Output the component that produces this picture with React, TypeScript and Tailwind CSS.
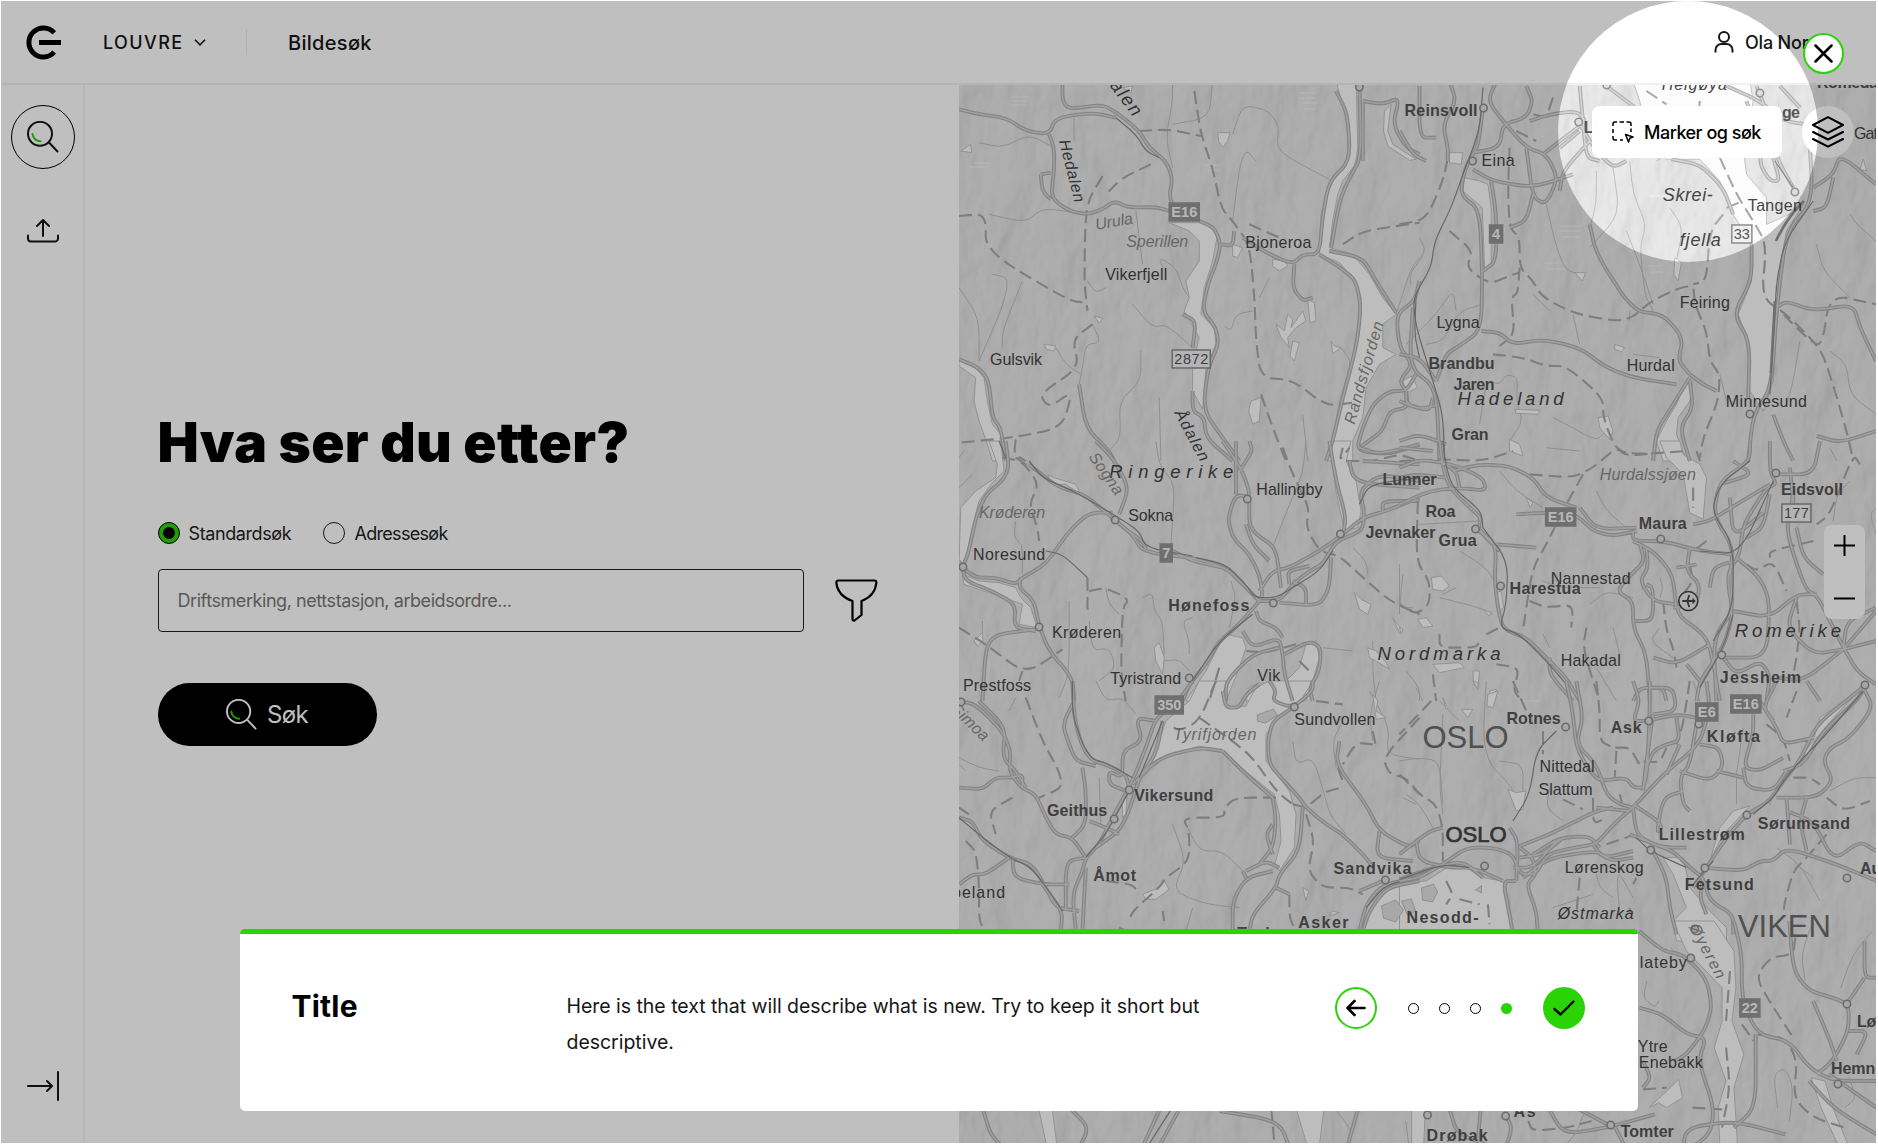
import React from "react";

type Layer = { x: number; y: number; sx?: number; water: string[]; roads: string[]; rails?: string[]; borders: string[]; streams: string[] };

// Each sheet is drawn in thirds of a pixel from its own origin.
const sheets: Layer[] = [
  {
    x: 960, y: 80,
    water: [
      "M1130,0L1190,0L1195,200Q1190,250 1180,260L1150,300L1135,340L1120,420L1110,500L1180,520L1230,580L1270,650L1310,700L1270,730L1270,800L1310,820L1260,850L1220,920L1210,1010L1180,1080L1180,1140L1105,1140L1120,1080L1140,960L1170,860L1200,760L1205,650L1190,600L1140,545L1080,520L1085,400L1110,310L1165,240L1165,130Z",
      "M630,425L740,425L775,460L760,540L735,620L725,700L765,740L770,790L740,860L735,930L730,985L700,930L700,850L720,770L675,690L690,650L680,600L720,540L720,480L690,450Z",
      "M0,840L40,850L75,890L85,960L100,1030L125,1060L130,1140L100,1140L85,1090L60,1020L45,960L50,890L0,855Z",
      "M775,155L812,155L805,180L790,200L778,180Z", "M940,535L975,540L985,555L960,570L940,555Z",
      "M950,730L975,750L985,700L1000,715L995,740L1030,690L1040,720L1010,740L985,770L990,800L965,770Z", "M1045,655L1065,665L1070,720L1052,725Z",
      "M1000,780L1020,785L1005,840L992,825Z", "M1115,780L1125,795L1145,800L1120,818Z", "M875,960L905,950L900,1020L880,1030L868,990Z",
      "M255,790L290,795L285,810L262,805Z", "M405,705L432,712L420,725Z", "M5,210L35,190L38,215Z", "M820,490L850,500L835,530L820,525Z",
      "M1275,90L1295,70L1285,150L1300,190L1370,235L1350,238L1285,195L1272,150Z", "M490,20L520,15L515,35Z",
    ],
    roads: [
      "M310,0L310,60L330,85L430,70L480,100L540,150L570,200L620,240L640,290L630,350L650,390",
      "M0,85L60,100L140,110L200,150L270,160L290,110L400,95L470,110",
      "M270,160L285,200L285,270L275,350L330,390L385,400L430,385L465,360L510,380L590,378L630,390",
      "M245,280L250,330L275,355M245,280L275,275", "M720,420L765,440L785,490L770,550L745,610L730,690L770,740L778,790L750,850L735,940L740,1000L790,1070L840,1140",
      "M700,800L710,720L670,700M700,930L700,990L735,1010L740,1070L820,1140", "M1200,0L1205,230L1170,290L1140,360L1115,500",
      "M1130,30L1165,100L1172,240L1110,300L1090,400L1080,520L1030,520L1000,550L920,515L850,470",
      "M1080,520L1150,565L1190,600L1205,680L1190,800L1150,950L1120,1080L1100,1140", "M1110,510L1210,530L1250,600L1310,695",
      "M785,490L820,495L825,450M1005,550L1000,620L1030,660L1060,650", "M1380,600L1365,660L1310,700L1320,800L1360,850L1320,900L1340,930",
      "M0,835L60,860L90,900L100,1010L125,1040L140,1140", "M1370,880L1340,930L1290,930L1240,970L1210,1040L1190,1110L1290,1120L1380,1090",
      "M1340,930L1345,980L1290,990L1270,1050L1200,1100", "M1210,60L1270,70L1320,50L1300,130L1340,200L1380,220M1210,60L1210,240", "M360,910L380,1040L450,1110L465,1140",
    ],
    rails: ["M470,110L530,160L560,210L600,230", "M1370,640L1365,760L1380,830"],
    borders: [
      "M705,30L725,160L760,260L785,380L820,420L870,490L885,640L890,780L905,890L1000,897L1100,975L1180,965", "M540,150L630,145L725,165",
      "M575,250L490,290L440,340M430,285L380,370L375,600L385,690", "M0,405L80,398L80,510L330,660L385,665", "M905,940L940,1040L980,1140",
      "M400,730L340,775L360,860L240,940L270,980L340,930L310,1040L160,1070L0,1085", "M1150,490L1210,450L1380,425M870,430L960,470", "M170,1075L165,1120L200,1140",
    ],
    streams: [
      "M380,400L250,380L200,425L90,400M285,200L210,160L130,200L60,185", "M820,420L840,260L860,205L890,240M760,0L750,110L640,130",
      "M640,260L620,170L640,60L640,0M820,160L850,70L930,90L960,140L950,210L1110,295", "M530,390L550,550M610,560L600,530L650,560L670,620L690,650",
      "M100,580L150,590L130,680L60,840M190,600L130,750L130,800M0,620L60,710L60,840", "M520,670L580,740L620,730L700,800M400,730L425,785L380,790L370,860L360,910",
      "M545,810L545,900L480,960L485,1070L450,1110M290,800L320,850L365,880", "M1380,530L1355,560L1310,700M880,690L830,700L815,750L795,735M1145,800L1175,840L1160,900",
      "M600,950L605,1140M1030,1000L1045,1140M345,110L345,180M385,600L410,635L440,620M900,650L930,590",
    ],
  },
  {
    x: 1400, y: 80,
    water: [
      "M700,0L1050,0L1060,60L1030,200L1040,280L1100,350L1100,430L1190,390L1210,370L1160,450L1140,560L1130,680L1120,900L1090,990L1050,930L1045,780L1015,700L1055,600L1055,490L1000,400L960,300L900,235L800,235L750,180L720,60Z",
      "M195,290L240,300L265,310L275,380L275,545L255,565L248,380L190,330Z",
      "M860,900L880,900L870,960L835,1010L830,1060L860,1140L790,1140L770,1080L800,1020L830,970Z",
      "M150,215L190,215L185,250L150,245Z", "M825,530L845,545L835,600L822,580Z", "M525,575L558,575L548,600Z", "M645,790L675,800L665,812L645,805Z",
      "M345,985L420,988L415,1000L350,997Z", "M595,1010L625,1005L640,1050L630,1075L600,1040Z", "M330,1075L360,1090L370,1125L330,1110Z", "M10,900L35,885L55,920L20,935Z",
      "M1390,235L1400,270L1380,265Z",
    ],
    roads: [
      "M250,80L235,200L200,250L180,340L240,385L248,570L245,750L170,800L140,820L110,900",
      "M150,0L170,60L130,130L145,200L145,240M60,15L60,170L110,170", "M290,0L265,60L310,120L380,200L440,220L475,290L440,370L400,350L380,200",
      "M380,15L400,60L380,110L310,130L300,200L220,215", "M220,265L280,300L400,320L520,280M275,300L290,400L290,540L250,570", "M400,340L380,420L330,440",
      "M430,220L520,150L560,120L530,90L450,100L390,120M540,130L590,210L640,260L680,240", "M540,15L550,120L560,230L600,240M620,15L680,60L720,90",
      "M480,200L540,150M480,330L490,270L570,180", "M245,750L300,755L340,790L430,775L540,800L620,860L700,890L830,910M570,430L590,520L700,690L790,700L850,770L835,840L870,880",
      "M870,880L910,910L950,930M870,890L820,970L770,1050L760,1140M870,900L880,980L840,1040L870,1140",
      "M815,235L900,250L970,320L1000,400M1070,15L1100,90L1130,230L1180,320M980,15L1080,60L1150,120L1220,130M1140,15L1200,80M1040,60L1060,120",
      "M1120,230L1140,300L1110,300L1080,250L1085,200", "M1055,490L1055,600L1000,700L1050,780L1045,950",
      "M1225,130L1240,360L1160,450L1130,680L1115,920L1060,1000L1045,1140", "M1130,680L1160,660L1240,690L1360,670L1380,740L1428,840", "M1240,320L1300,280L1320,220L1428,310M1300,290L1280,380L1240,390",
      "M1120,1000L1150,1080L1180,1140M1428,1050L1320,1085L1250,1065M0,150L40,220L80,240", "M40,680L30,860L110,920L120,1140M0,820L60,830L110,900M0,960L60,985L120,970", "M0,1080L60,1060L140,1090",
      "M20,930L20,970L90,990L100,950",
    ],
    rails: ["M250,20L240,150L190,280L155,380L105,480L95,560L40,650L50,740L100,900L130,1000L135,1140", "M1125,240L1180,320", "M1240,360L1155,480L1130,600L1125,700L1110,940"],
    borders: [
      "M330,200L325,330L330,440L360,470L360,560L400,600L430,650L530,700L680,725L760,655L880,605L885,670L920,750L930,840L960,880L955,960L910,1070L900,1130",
      "M0,430L80,415L130,300L145,230M360,560L355,635L335,650L345,760L300,795", "M280,820L370,830L440,855L500,855L610,950L610,1010L650,1110L720,1120L860,1110",
      "M970,400L930,450L920,600L880,610M740,30L800,70", "M900,60L895,110M960,230L1010,340L1060,420L1100,490L1085,650L1160,700L1260,800L1290,880L1340,1050L1360,1140",
      "M980,380L1030,360M1150,700L1220,770L1265,800L1290,640L1428,670", "M150,450L220,510L200,560L270,610L340,580L360,575", "M350,150L410,180M460,50L440,110L400,100",
    ],
    streams: [
      "M60,470L80,510L30,580L35,610M20,790L110,700L160,625L170,690M250,670L180,690L130,780L80,790", "M440,370L470,500L500,570L550,580M400,640L450,690",
      "M590,270L590,370L570,440M640,260L660,400L570,500M690,240L700,340L740,430L720,500L735,640L760,690", "M810,380L850,440L830,540M680,450L720,550L760,670M690,690L690,720",
      "M1350,400L1370,430L1428,480M1250,490L1270,570L1350,650M1200,780L1180,900L1160,970M1290,810L1340,850L1350,940L1428,1000", "M240,1030L260,900L300,910L320,880L355,890L350,960L370,1020L330,1080",
      "M520,700L540,790M460,1010L500,1030L590,1080L620,1050M780,830L700,820M440,1100L540,1110", "M960,880L980,960M1290,1100L1310,1140M770,240L900,160",
    ],
  },
  {
    x: 960, y: 440,
    water: [
      "M1110,0L1175,0L1160,60L1190,120L1205,210L1195,260L1155,270L1130,150Z", "M90,0L125,0L135,90L100,125L60,180L40,260L25,330L15,370L0,370L5,200L50,150L110,110L115,70Z",
      "M10,400L60,420L120,425L170,440L185,470L215,500L235,560L180,550L190,490L150,475L90,455L15,430Z",
      "M800,580L850,590L860,620L840,680L800,780L680,780L740,690L780,610Z", "M1040,610L1070,600L1080,650L1060,720L1040,780L980,780L980,720L1020,680Z",
      "M585,620L600,605L615,650L610,700L590,660Z", "M1185,455L1205,475L1235,490L1225,520L1200,505Z", "M1225,620L1250,630L1280,665L1290,685L1250,660L1230,650Z",
      "M45,600L70,575L72,600L55,615Z", "M265,100L285,110L350,130L365,160L320,130L280,130Z", "M870,740L900,725L940,750L910,780L860,780Z", "M1300,530L1330,570L1320,575Z",
    ],
    roads: [
      "M140,0L150,80L130,120L80,160L50,230L30,330L10,380L50,410L110,410L170,430L190,410L260,370L330,270L390,215L460,215",
      "M210,70L290,135L370,160L400,180L470,240L520,280L545,325L600,340L700,350L800,380L850,430L900,480",
      "M470,240L500,265L550,300L560,325", "M790,0L850,90L875,170L830,160L805,230L820,290L870,340L900,400L910,460L900,480", "M870,180L870,250L890,280L950,320L965,440",
      "M900,450L940,390L990,380L1080,330L1150,280L1210,230L1280,210L1380,170", "M900,480L960,480L1000,430L1050,390L1090,370L1130,300L1210,270L1215,210L1200,150L1260,100L1380,120",
      "M990,430L985,390L1050,375M960,485L1080,495L1110,440L1115,350M1000,420L1040,440L1040,490", "M900,480L830,560L780,600L740,670L690,730L670,780",
      "M850,570L880,620L960,590L970,640L975,700L1000,780M890,510L900,540L950,560L970,590", "M975,640L1050,600L1085,620L1080,690L1050,740L1060,780M800,780L800,720L880,640L960,620",
      "M10,380L20,420L100,450L170,490L165,560L230,570M10,380L0,360", "M185,410L180,440L225,480L240,555L270,630L340,710L345,780M230,565L110,580L80,620L70,780",
      "M410,0L460,50L510,140L480,220M830,160L830,0M840,90L880,30L870,0", "M1170,60L1180,110L1230,130L1380,140M1210,60L1380,70M1200,20L1260,40L1380,10", "M1150,280L1160,230L1130,120L1110,0", "M1270,210L1270,180L1380,180",
      "M860,250L880,310L930,360M640,330L700,360L790,380",
    ],
    rails: ["M120,0L140,50M210,60L250,110L340,150L370,165L470,225L540,270L560,320L700,345", "M710,350L800,370L860,430L885,470L950,470L1000,440L1080,390L1120,330", "M880,520L780,600L700,720", "M1380,110L1230,130L1200,190M260,330L310,340L385,410"],
    borders: [
      "M130,50L190,60L240,130L210,190L235,260L240,300M170,50L230,90", "M385,410L385,520M390,450L440,440L510,475L490,500L485,700L500,780", "M970,20L1000,100L1050,200L1040,260L1080,330L1140,345L1200,400L1290,480L1380,520",
      "M0,560L80,610L200,700L310,625M190,690L180,720", "M1160,60L1210,60L1240,60L1320,40L1380,60M1150,20L1140,60L1170,20", "M860,630L920,635L1010,610M780,680L750,780M1020,660L1060,700",
    ],
    streams: [
      "M590,0L600,70L640,120L645,170L635,310M1040,0L1030,100L990,190L940,320M170,240L165,290L190,310L190,400", "M440,440L450,490L480,520M550,470L580,455L585,510L610,540L615,640",
      "M330,480L330,700L300,770M390,540L400,630L450,620L470,680L420,720M610,660L660,655L690,690", "M1090,620L1180,630M700,530L670,540L690,600L690,640M815,420L830,470L810,560", "M1180,320L1220,360L1225,400M1330,400L1320,500L1360,500M1240,600L1240,700L1250,780",
      "M0,140L40,100M15,30L0,50M70,540L70,600",
    ],
  },
  {
    x: 1400, y: 440,
    water: ["M780,0L840,0L850,40L900,70L920,110L910,235L870,215L850,100L800,50Z", "M95,410L125,405L150,435L130,450L100,445Z", "M55,535L80,530L100,555L70,560Z", "M100,670L180,665L195,680L120,695Z", "M220,690L240,690L235,740L222,730Z", "M250,505L275,515L270,525Z", "M290,455L305,450L312,500L300,510Z", "M270,750L290,745L285,780L270,780Z", "M380,170L400,185L392,200Z", "M0,560L10,565L5,580Z"],
    roads: [
      "M120,0L130,80L150,140L210,200L245,230L235,265L290,310L285,420L295,500L310,565L380,590L430,640L500,710L540,780", "M235,265L300,330M290,310L410,320",
      "M350,220L430,215L530,220L580,270L640,285L710,270M540,200L590,265L710,260", "M0,80L60,55L160,70L250,110L260,150L180,140L90,150L0,190", "M160,90L240,70L330,75L400,110L440,170L530,200",
      "M700,270L700,300L790,300L900,330L1000,340M700,300L760,330L820,400L830,520L900,570L930,610L960,780", "M720,310L735,360L695,400L650,450L700,480L700,560L740,640L750,780M740,320L745,380L720,420L760,480L830,490",
      "M870,320L860,390L900,430L890,490L820,500M890,370L830,380M700,540L760,540L760,440L740,430", "M1050,0L1050,60L960,120L940,220L1000,320L990,400L1000,510L940,590L950,780",
      "M1110,0L1110,90L1130,130L1100,140L1030,250L1020,340L980,400L1000,520L970,620L900,720L890,780", "M1110,130L1010,190L930,240L880,250M1110,160L1090,260L1040,290M990,170L1000,290L1090,215M960,130L1060,100L1000,60",
      "M1170,80L1180,180L1160,260L1180,340L1220,450L1250,460L1320,600L1370,690L1428,730", "M1190,260L1210,350L1270,400M1130,100L1240,100L1260,0M1180,200L1180,150",
      "M1000,510L1110,530L1190,460L1250,460M1010,350L1080,410L1110,480L1100,650L970,650", "M1330,625L1428,600M1330,625L1428,510M1330,625L1210,720L1130,710M1330,625L1340,540L1428,500M1220,720L1260,780",
      "M930,610L830,670L760,650M900,720L860,670M970,650L1010,700L1080,660L1110,700L1100,780", "M930,440L940,380L1000,360M1190,470L1160,560L1240,640L1330,625", "M0,20L100,30M700,780L720,740L790,740L800,780M0,110L50,100L140,110",
      "M450,650L450,700L520,780M120,60L170,90L180,140",
    ],
    rails: ["M130,0L140,80L160,140L245,210L250,260", "M250,260L325,360L320,490L300,560L360,580L440,660L500,730", "M1050,60L960,130L935,210L1000,310L1000,500L940,600", "M900,330L1020,340L1120,120M1000,520L970,620L900,740"],
    borders: [
      "M0,60L130,55L250,60L340,30M390,100L520,110L580,80L650,20L680,45L780,35", "M550,100L500,190L440,310L400,380L380,500L370,570", "M55,180L50,360L90,420L90,490L50,520L0,490", "M390,480L440,500L520,490L515,560",
      "M120,580L120,620L230,620L240,600M260,580L300,560M100,700L110,780", "M880,140L880,200M890,30L900,60", "M1380,70L1360,40L1290,220L1250,250M1240,300L1110,330L1110,350M1040,370L1070,390L1120,360L1160,450", "M870,370L880,420L850,460M790,480L800,570L820,620L830,680", "M290,670L360,680L340,750L370,780M560,560L550,620L580,720L600,780", "M1190,480L1200,560L1190,650L1180,700M920,300L880,330",
    ],
    streams: [
      "M590,150L620,210L680,260M300,90L350,150L430,200M60,250L240,240M180,330L260,380L290,430", "M570,490L620,450L700,470M640,560L660,640M120,470L240,500L280,520M590,680L650,780M0,370L0,520",
      "M780,410L790,440L780,470M430,420L480,440L600,440M450,620L430,580M170,440L130,460", "M1428,280L1410,220L1428,200M1300,240L1310,160L1350,120M20,690L60,740L60,780M780,560L750,600L820,650",
    ],
  },
  {
    x: 960, y: 680,
    water: [
      "M690,60L720,0L800,0L790,50L810,80L860,75L890,20L930,0L1060,0L1030,50L1000,80L950,120L920,160L920,240L960,290L990,330L1010,400L1005,500L960,570L945,555L965,480L960,400L945,340L870,280L790,210L720,195L620,225L560,280L530,310L580,240L620,120Z",
      "M1280,620L1380,600L1380,760L1190,760L1215,720Z", "M490,410L500,400L505,330L490,360Z", "M550,640L600,620L612,595L630,625L590,655L560,655Z", "M1240,40L1255,60L1250,90L1280,110L1250,115Z", "M1030,620L1048,630L1040,660Z", "M1120,690L1140,695L1110,705Z",
    ],
    roads: [
      "M0,60L50,70L130,150L155,210L150,270L185,320L230,340L260,410L290,460L340,470L380,530", "M60,60L140,140L130,230L170,270L200,320M0,320L70,325L110,290L160,290L190,280L190,320", "M340,0L345,110L370,200L400,240L440,250L500,280L510,320",
      "M345,60L310,130L330,190L350,240L410,255M370,260L380,330L380,430L340,470", "M700,0L650,70L590,110L560,200L520,300L460,410L420,490L380,530L370,570L340,640L350,750", "M610,120L590,220L540,290L510,390L480,450L410,500",
      "M590,120L530,110L550,180L490,210L490,290L450,270L450,310L500,330", "M0,410L40,420L70,480L150,530L220,550L260,620L290,680L360,690M160,530L165,590L250,610L330,610M380,530L320,540L320,690",
      "M250,610L310,690L305,750M380,560L370,750M150,530L80,580L40,580L0,610", "M1000,80L940,120L925,180L930,250L965,290L1020,350L1040,380L1100,430L1150,460L1220,530L1240,560",
      "M1030,380L1020,510L960,580L950,620L880,700L870,750M940,570L860,590L820,660L820,750M860,570L920,540L960,560", "M940,430L920,460L940,520M940,350L950,420L940,500L900,550M860,590L850,570", "M790,30L800,80L840,80L860,40L900,10",
      "M930,0L950,30L940,60L1000,80L1060,30L1060,0M790,210L860,280L940,350M520,310L600,230L720,200L790,210", "M1140,180L1130,250L1220,370L1260,450L1350,500L1380,480M1260,450L1250,530L1360,540M950,620L990,640M390,420L440,440L480,460",
      "M1380,590L1270,610L1220,670L1200,750M1200,630L1270,600M1380,600L1280,620L1230,690L1210,750",
    ],
    rails: ["M340,0L340,100L370,190L400,235L440,245L520,290", "M610,120L540,290", "M510,330L440,460L380,530M0,410L60,460L150,530L220,560L310,690", "M1220,680L1280,610L1380,590"],
    borders: [
      "M200,50L250,180L300,270L310,320L240,350M160,350L90,390L110,460M0,380L30,400", "M20,480L50,510L60,600L60,720L80,750", "M770,0L720,120L660,150L630,130M720,110L820,180L880,230L950,330L1000,370M950,350L830,350L795,380L795,410L670,410L690,450L690,540L620,590L600,620L520,690L510,720",
      "M1000,370L1040,380L1100,330L1150,320M1040,400L1065,480L1045,570L1090,620L1170,620L1210,640M990,640L990,710L1010,750", "M1380,110L1270,230L1290,280L1340,290L1380,340M1240,150L1250,200", "M1240,190L1190,185L1150,250M1070,60L1150,70", "M440,600L520,610L540,640M610,690L615,720M480,740L500,750", "M1135,260L1150,300",
    ],
    streams: [
      "M0,230L60,260L120,270M640,430L680,540L640,630L740,670L840,680M680,430L720,510L790,510L850,570", "M1000,180L1010,250L1060,230L1090,320L1110,400L1160,460M1130,260L1120,180L1145,130", "M1230,30L1290,140L1280,220L1380,235M1330,350L1370,370M700,680L680,750M0,250L20,270M410,0L440,60L490,50L530,100",
      "M420,290L425,430M170,50L150,90M1260,0L1230,100L1240,180",
    ],
  },
  {
    x: 1400, y: 680,
    water: [
      "M0,605L80,600L150,555L200,560L250,590L310,600L330,660L335,760L0,760Z", "M790,530L850,530L870,620L930,690L980,740L980,780L830,780L820,720L860,680L820,580Z",
      "M325,325L350,335L378,330L370,385L350,390Z", "M265,40L295,30L280,80L262,75Z", "M185,85L220,85L205,110Z", "M130,50L145,80L140,85Z", "M220,0L235,5L235,25Z", "M1260,110L1370,35L1310,100L1250,170L1210,240L1200,230L1240,180Z", "M1000,390L1050,375L970,460L930,540L960,440Z", "M1100,355L1120,345L1110,370Z",
    ],
    roads: [
      "M0,600L60,590L130,550L200,500L280,500L340,520L360,580L410,580L440,520L520,500L590,490L640,430L700,380L790,280L900,190L930,80L920,0", "M360,495L450,460L510,430L590,390L640,380M400,520L480,470L570,465L600,500",
      "M360,530L430,520L490,470M370,590L450,530L590,510L620,530L700,510", "M330,440L355,480L350,600M340,560L400,560L470,480M360,500L400,530L410,580L380,610L410,690L415,760", "M350,600L310,600L330,700L340,760M0,520L90,450L130,440M50,480L60,540L150,560L220,560L310,600",
      "M0,595L100,560L190,540L250,590", "M500,0L520,100L530,200L570,270L600,300L680,290L700,320L740,320L750,100L750,0M530,0L550,110L530,190L590,250L620,340L660,370L700,380",
      "M700,0L720,60L700,120L740,120L830,100L890,110M760,100L740,240L730,330M750,20L820,20L830,90L760,100", "M830,110L840,180L800,190L760,210L740,260M890,130L870,250L840,290L850,370L870,390M800,280L840,190",
      "M900,190L960,200L970,260L930,300L840,270M1060,100L1060,160L1030,260L1080,270L1150,230M1080,60L1130,140L1150,190L1240,170M1130,0L1090,80L1120,120", "M1030,260L1040,320L1120,330L1160,270M950,270L1030,290",
      "M1150,270L1210,250L1270,150L1370,60L1400,10M1390,20L1420,80L1350,170L1290,200L1270,240L1300,300L1250,350L1130,350", "M1400,10L1350,50L1250,130L1200,240L1150,300L1110,360L1040,400L980,470L920,560L880,620",
      "M700,380L710,460L760,490L820,510L870,560L910,590L930,660L1000,700L1000,760M690,460L790,500L860,500M700,370L790,430L770,460L790,350L850,330", "M760,510L800,590L810,680L830,760M910,560L1030,570L1080,540L1120,540L1160,500L1310,550L1430,600",
      "M910,590L900,650L920,700M1160,350L1170,490M1160,390L1240,420L1300,540L1380,480L1428,510M1220,350L1200,420L1220,510", "M580,490L600,520L640,540L700,530M590,380L690,390",
    ],
    rails: ["M470,150L410,210L390,340L340,420", "M1390,30L1270,170L1200,240L1150,300L1120,350L1060,400M940,540L880,610", "M710,470L750,510L860,560", "M0,595L130,550L210,560"],
    borders: [
      "M340,0L380,90M95,60L0,160M0,280L60,340L110,370L130,440L130,540", "M430,150L430,220M590,0L600,90L600,180L640,200L650,200L690,200L720,250L710,240L780,245L800,200", "M490,355L550,385M580,350L580,430L620,410", "M660,340L670,380M620,490L680,470L700,460",
      "M540,590L530,700M700,610L710,590M690,700L690,680", "M1180,290L1230,290L1260,310M1280,350L1330,390L1410,360M1280,460L1220,530L1180,570L1155,660L1150,700M1100,130L1150,170L1170,240", "M870,0L850,130L830,190M1190,30L1160,110M650,210L645,290", "M140,600L160,640L140,670M180,655L240,670M265,670L270,730",
    ],
    streams: [
      "M0,240L60,230L120,240L130,370M130,100L120,320L130,400M260,0L250,170L270,250L330,310L350,350", "M120,60L180,120M450,320L440,380L490,420M1010,280L1010,370M1130,500L1200,550L1260,660M1200,560L1240,590", "M590,580L600,620L640,650M460,680L580,640M700,650L650,560L660,700M20,340L60,370L100,440M300,240L370,250L370,330", "M1290,330L1360,290L1428,290M880,0L900,60M1030,140L1010,280M50,20L70,60",
    ],
  },
  {
    x: 1260, y: 920, sx: 0.3951,
    water: [
      "M1045,0L1150,0L1200,90L1205,200L1195,300L1225,400L1200,500L1210,690L1165,690L1160,560L1180,480L1150,380L1170,300L1170,200L1080,90Z", "M1395,470L1430,480L1450,560L1495,690L1470,690L1420,560Z", "M985,560L1030,510L1060,475L1070,530L1030,560L1010,545Z", "M90,550L165,550L150,690L125,690Z", "M385,550L420,550L415,690L385,690Z", "M-560,550L-525,550L-510,690L-535,690Z",
    ],
    roads: [
      "M960,30L1020,90L1070,100L1130,170L1145,260L1125,330L1080,400L1050,420M960,260L1020,280L1080,340L1130,350L1110,420L1150,560L1140,640L1080,690", "M1200,0L1220,100L1220,240L1260,340L1340,360L1390,440L1450,480L1560,480", "M1340,0L1350,150L1390,210L1450,230L1490,250L1490,330L1450,420L1410,460",
      "M1400,240L1440,350L1460,420M1490,330L1540,330L1510,400M1530,60L1530,170L1560,170M1530,170L1490,240", "M1255,340L1255,560L1200,620M1390,480L1450,560L1560,640M1070,690L1080,620L1200,600L1330,640", "M250,560L220,690M480,560L500,640L620,690M560,560L550,690M730,560L770,640L880,620L1000,580M620,580L640,620L620,690", "M880,610L800,560M900,620L930,690M970,420L990,470L970,500M1440,460L1560,560",
      "M-700,560L-680,640L-640,690M-480,560L-430,620L-460,690M-250,560L-300,690M-200,560L-260,690M-100,570L50,600L80,690",
    ],
    rails: ["M-220,560L-290,690"],
    borders: ["M1190,150L1180,300M1220,310L1250,360M1355,50L1350,100L1290,110L1255,170L1300,260L1350,350M1260,340L1330,350L1360,420L1350,530L1400,590L1480,620", "M1180,380L1190,500L1170,620M970,505L1030,500M1095,560L1170,565M30,560L40,690M680,600L690,630L780,620L840,600"],
    streams: ["M1400,0L1370,100L1380,180M1550,30L1500,100L1470,200M1310,560L1300,460L1330,440L1350,500L1340,600M980,180L970,230L1000,260L1010,240", "M1490,470L1510,530L1480,560M1040,80L1060,110M820,580L800,640L760,690M190,560L240,640L210,690M380,690L370,600"],
  },
];

// Rounds the corners of a polyline while keeping its end points.
const smooth = (d: string) =>
  d.split("M").filter(Boolean).map((part) => {
    const p = part.split("L").map((s) => s.split(",").map(Number));
    if (p.length < 3) return "M" + part;
    const at = (a: number[], b: number[], t: number) => `${a[0] + (b[0] - a[0]) * t},${a[1] + (b[1] - a[1]) * t}`;
    let out = `M${p[0]}`;
    for (let i = 1; i < p.length - 1; i++) out += `L${at(p[i], p[i - 1], 0.4)}Q${p[i]} ${at(p[i], p[i + 1], 0.4)}`;
    return out + `L${p[p.length - 1]}`;
  }).join("");

const relief =
  "M1012,96h18M1010,100h20M1012,104h16M974,162h18M970,166h20M1300,92h16M1298,97h18M1302,102h16M1304,108h12M1560,225h22M1558,230h24M1562,236h18M1545,262h22M1547,268h20M1650,195h20M1648,265h14M1650,271h14M1470,205h16M1472,211h14M1205,164h14M1207,169h12M1525,700h14M1600,670h12";

const nodes: [number, number][] = [
  [1484, 107], [1473, 160], [1579, 121], [1760, 92], [1795, 191], [1750, 413], [1776, 472], [1661, 538], [1476, 528], [1501, 585], [1722, 654], [1865, 684], [1248, 498], [1341, 533], [1274, 602], [1116, 519], [964, 566], [1040, 626], [1190, 677],
  [1295, 706], [1130, 789], [1115, 818], [1386, 879], [1485, 865], [1566, 726], [1649, 720], [1699, 723], [1747, 814], [1651, 849], [1705, 867], [1847, 877], [1695, 928], [1691, 957], [1847, 1003], [1838, 1083], [1506, 1115], [1611, 1124], [1428, 1114], [962, 701], [1607, 84], [1360, 86],
];

type Label = [text: string, x: number, y: number, w: number, kind?: string, rotate?: number];
const labels: Label[] = [
  ["dalen", 1103, 75, 52, "I", 53], ["Hedalen", 1060, 140, 64, "i", 76], ["Urula", 1097, 229, 38, "w", -10], ["Sperillen", 1127, 246, 62, "w"], ["Vikerfjell", 1106, 279, 62], ["Bjoneroa", 1246, 247, 66], ["Gulsvik", 991, 364, 52],
  ["Ådalen", 1175, 412, 56, "i", 62], ["Randsfjorden", 1355, 424, 106, "w", -74], ["Ringerike", 1110, 477, 124, "I"], ["Sogna", 1089, 456, 48, "w", 55], ["Hallingby", 1257, 494, 66], ["Sokna", 1129, 520, 45], ["Krøderen", 980, 517, 66, "w"],
  ["Noresund", 974, 559, 72], ["Hønefoss", 1169, 610, 81, "b"], ["Krøderen", 1053, 637, 69], ["Tyristrand", 1111, 683, 71], ["Vik", 1258, 680, 23], ["Prestfoss", 964, 690, 68], ["Simoa", 951, 709, 46, "w", 44],
  ["Reinsvoll", 1405, 115, 73, "b"], ["Eina", 1482, 165, 33], ["L", 1584, 132, 8, "b"], ["Helgøya", 1662, 89, 65, "i"], ["Romedal", 1817, 87, 65, "b"], ["Stange", 1750, 117, 50, "b"], ["Gata", 1854, 138, 32],
  ["Skrei-", 1663, 200, 50, "i2"], ["Tangen", 1748, 210, 54], ["fjella", 1680, 245, 41, "i2"], ["Feiring", 1680, 307, 50], ["Lygna", 1437, 327, 43], ["Brandbu", 1429, 368, 66, "b"], ["Jaren", 1454, 389, 41, "b"], ["Hadeland", 1458, 404, 106, "I"], ["Gran", 1452, 439, 37, "b"],
  ["Hurdal", 1627, 370, 48], ["Minnesund", 1726, 406, 81], ["Lunner", 1383, 484, 54, "b"], ["Roa", 1426, 516, 30, "b"], ["Jevnaker", 1366, 537, 70, "b"], ["Grua", 1439, 545, 38, "b"], ["Hurdalssjøen", 1600, 479, 96, "w"], ["Eidsvoll", 1781, 494, 62, "b"], ["Maura", 1639, 528, 48, "b"],
  ["Nannestad", 1551, 583, 80], ["Harestua", 1510, 593, 71, "b"], ["Nordmarka", 1378, 659, 123, "I"], ["Romerike", 1735, 636, 106, "I"], ["Hakadal", 1561, 665, 60], ["Jessheim", 1720, 682, 81, "b"], ["Sundvollen", 1295, 724, 81], ["Tyrifjorden", 1174, 739, 83, "w"],
  ["Vikersund", 1135, 800, 79, "b"], ["Geithus", 1048, 815, 60, "b"], ["Åmot", 1094, 880, 43, "b"], ["oeland", 953, 897, 53], ["Asker", 1299, 927, 50, "b"], ["Sandvika", 1334, 873, 78, "b"], ["Tranby", 1238, 938, 45, "b"],
  ["OSLO", 1423, 747, 86, "city"], ["Rotnes", 1507, 723, 54, "b"], ["Ask", 1611, 732, 31, "b"], ["Kløfta", 1707, 741, 53, "b"], ["Nittedal", 1540, 771, 55], ["Slattum", 1539, 794, 54], ["OSLO", 1446, 841, 61, "town"], ["Lillestrøm", 1659, 839, 86, "b"], ["Sørumsand", 1758, 828, 92, "b"],
  ["Lørenskog", 1565, 872, 79], ["Fetsund", 1685, 889, 69, "b"], ["Nesodd-", 1407, 922, 72, "b"], ["Østmarka", 1558, 918, 76, "i"], ["VIKEN", 1738, 936, 93, "city"], ["Aurskog", 1860, 873, 65, "b"], ["Øyeren", 1689, 926, 60, "w", 62], ["lateby", 1640, 967, 47],
  ["Ytre", 1638, 1051, 30], ["Enebakk", 1639, 1067, 64], ["Hemnes", 1831, 1073, 62, "b"], ["Løken", 1857, 1026, 46, "b"], ["Drøbak", 1427, 1140, 61, "b"], ["Ås", 1514, 1116, 22, "b"], ["Tomter", 1621, 1136, 53, "b"],
];

const shields: [string, number, number, number, boolean][] = [
  ["E16", 1170, 202, 30, true], ["2872", 1173, 349, 38, false], ["7", 1161, 543, 12, true], ["350", 1156, 695, 28, true], ["4", 1490, 224, 13, true], ["33", 1732, 224, 20, false], ["E16", 1546, 507, 30, true], ["177", 1782, 503, 29, false], ["E6", 1696, 702, 22, true], ["E16", 1731, 694, 30, true], ["22", 1740, 998, 20, true],
];

const sizes: Record<string, number> = { city: 31, town: 22, I: 18.5, i2: 18 };
const inks: Record<string, string> = { w: "#8a8a8a", city: "#6c6c6c", b: "#555555" };

const Lines = ({ d, stroke, w, dash }: { d: string[]; stroke: string; w: number; dash?: string }) => (
  <path d={d.map(smooth).join("")} fill="none" stroke={stroke} strokeWidth={w} strokeDasharray={dash} strokeLinejoin="round" vectorEffect="non-scaling-stroke" />
);

const place = (s: Layer) => `translate(${s.x} ${s.y}) scale(${s.sx ?? 1 / 3} ${1 / 3})`;

function RegionMap() {
  return (
    <svg className="block h-full w-full" viewBox="960 84 916 1058" preserveAspectRatio="none" fontFamily="'Liberation Sans', Arial, sans-serif">
      <defs>
        <filter id="hills" x="0" y="0" width="100%" height="100%" colorInterpolationFilters="sRGB">
          <feTurbulence type="fractalNoise" baseFrequency="0.022 0.012" numOctaves="4" seed="8" result="n" />
          <feDiffuseLighting in="n" surfaceScale="6" diffuseConstant="1.02" lightingColor="#ffffff">
            <feDistantLight azimuth="215" elevation="62" />
          </feDiffuseLighting>
        </filter>
      </defs>
      <rect x="960" y="84" width="916" height="1058" fill="#e6e6e6" />
      <rect x="960" y="84" width="916" height="1058" filter="url(#hills)" opacity="0.17" />
      <path d={relief} stroke="#fafafa" strokeWidth="0.7" />
      {sheets.map((s, i) => (
        <g key={i} transform={place(s)}>
          <Lines d={s.streams} stroke="#c0c0c0" w={1} />
          <path d={s.water.join("")} fill="#fcfcfc" stroke="#c4c4c4" strokeWidth="1" strokeLinejoin="round" vectorEffect="non-scaling-stroke" />
        </g>
      ))}
      <path d="M1422,887l12-4 4,8-5,10-10-2ZM1402,900l10-2 4,12-8,4ZM1382,905l14-6 8,10-8,12-12-4ZM1476,889l6-4v7ZM1258,714l16-6 4,6-12,8-8-2Z" fill="#e0e0e0" stroke="#c4c4c4" />
      {sheets.map((s, i) => (
        <g key={i} transform={place(s)}>
          <Lines d={s.borders} stroke="#a9a9a9" w={2.1} dash="13 6" />
          <Lines d={s.roads} stroke="#b0b0b0" w={3.9} />
          <Lines d={s.roads} stroke="#d4d4d4" w={1.6} />
          <Lines d={s.rails ?? []} stroke="#8a8a8a" w={1.2} />
        </g>
      ))}
      <path d="M1776,240Q1788,215 1804,200M1775,300L1771,372" fill="none" stroke="#949494" strokeWidth="2.6" />
      {nodes.map(([x, y], i) => (
        <circle key={i} cx={x} cy={y} r="3.7" fill="#dedede" stroke="#919191" strokeWidth="1.6" />
      ))}
      <g transform="translate(1688.500 600)" stroke="#444">
        <circle r="9.500" fill="#e8e8e8" strokeWidth="1.600" />
        <path d="M-6,0H7M1,-6L-1,0L1,6M5,-2.500V2.500" fill="none" strokeWidth="1.800" />
      </g>
      {shields.map(([t, x, y, w, dark], i) => (
        <g key={i}>
          <rect x={x} y={y} width={w} height={18} fill={dark ? "#949494" : "#f0f0f0"} stroke={dark ? "#949494" : "#8c8c8c"} strokeWidth="1.500" />
          <text x={x + w / 2} y={y + 14.5} fontSize="14.500" fontWeight={dark ? 700 : 400} textAnchor="middle" fill={dark ? "#f5f5f5" : "#555"} textLength={w - 4}>{t}</text>
        </g>
      ))}
      {labels.map(([t, x, y, w, kind = "n", r], i) => (
        <text
          key={i}
          x={x}
          y={y}
          fontSize={sizes[kind] ?? 16}
          fontStyle={["i", "I", "i2", "w"].includes(kind) ? "italic" : "normal"}
          fontWeight={kind === "b" ? 700 : 400}
          fill={inks[kind] ?? "#454545"}
          stroke={kind === "town" ? "#454545" : "none"}
          strokeWidth="0.700"
          textLength={w}
          transform={r ? `rotate(${r} ${x} ${y})` : undefined}
        >
          {t}
        </text>
      ))}
    </svg>
  );
}

const Magnifier = ({ className }: { className: string }) => (
  <svg className={className} viewBox="0 0 32 32" fill="none" strokeLinecap="round">
    <circle cx="13" cy="12.800" r="12" stroke="currentColor" strokeWidth="2" />
    <path d="M22 21.500L30.500 30.500" stroke="currentColor" strokeWidth="2" />
    <path d="M5.500 13A8 8 0 0 0 13.500 20.300" stroke="#29d305" strokeWidth="2" />
  </svg>
);

export default function App() {
  return (
    <div className="h-[1146px] w-[1878px] overflow-hidden bg-white pt-px pl-px font-['Inter',sans-serif] text-[#161616]">
      <div className="relative flex h-[1142px] w-[1875px] flex-col overflow-hidden bg-white">
        <header className="flex h-[84px] shrink-0 items-center border-b-2 border-[#f0f0f0]">
          <svg className="ml-[24px] h-9 w-9" viewBox="0 0 36 36" fill="none" stroke="#000" strokeWidth="5">
            <path d="M29.200 8.800A14.500 14.500 0 1 0 29.200 28.200M14 18.500H36" />
          </svg>
          <span className="ml-[42px] w-[82px] whitespace-nowrap text-[18px] font-medium tracking-[1.4px]">LOUVRE</span>
          <svg className="ml-[9px] h-[7px] w-[12px]" viewBox="0 0 12 7" fill="none" stroke="currentColor" strokeWidth="1.600"><path d="M1 .8L6 5.800L11 .8" /></svg>
          <div className="ml-[40px] h-[26px] w-px bg-[#ededed]" />
          <span className="mt-[2px] ml-[41px] text-[20px] font-medium tracking-[0.3px]">Bildesøk</span>
          <div className="ml-auto mr-[32px] flex items-center gap-[11px]">
            <svg className="h-[22px] w-[20px]" viewBox="0 0 20 22" fill="none" stroke="currentColor" strokeWidth="2"><circle cx="10" cy="6" r="5" /><path d="M1.500 21.500v-2.500a6 6 0 0 1 6-6h5a6 6 0 0 1 6 6v2.500" /></svg>
            <span className="w-[99px] whitespace-nowrap text-[18px] font-medium tracking-[-0.200px]">Ola Nordlie</span>
          </div>
        </header>
        <div className="flex min-h-0 flex-1">
          <aside className="flex w-[84px] shrink-0 flex-col items-center border-r-2 border-[#f5f5f5] pt-[20px] pl-[2px]">
            <div className="flex h-[64px] w-[64px] items-center justify-center rounded-full border border-black"><Magnifier className="h-8 w-8" /></div>
            <svg className="mt-[50px] h-6 w-8" viewBox="0 0 32 24" fill="none" stroke="currentColor" strokeWidth="2" strokeLinecap="round" strokeLinejoin="round"><path d="M16 17V1.200M10 7L16 1L22 7M1 16.500V19.500a3 3 0 0 0 3 3H28a3 3 0 0 0 3-3V16.500" /></svg>
            <svg className="mt-auto mb-[42px] h-[30px] w-8" viewBox="0 0 32 30" fill="none" stroke="currentColor" strokeWidth="2" strokeLinecap="round"><path d="M1 15H25M20 10L25 15L20 20M31 1V29" /></svg>
          </aside>
          <main className="w-[874px] shrink-0 pt-[319px] pl-[72.500px]">
            <h1 className="text-[55px] leading-[76px] font-black tracking-[0.300px] text-black">Hva ser du etter?</h1>
            <div className="mt-[39px] flex h-[28px] items-center text-[18px] tracking-[-0.4px] text-[#222]">
              <span className="flex h-[22px] w-[22px] items-center justify-center rounded-full border-[1.5px] border-black bg-[#29d305]"><span className="h-[12px] w-[12px] rounded-full bg-black" /></span>
              <span className="ml-[9px] w-[104px] whitespace-nowrap">Standardsøk</span>
              <span className="ml-[30px] h-[22px] w-[22px] rounded-full border-[1.5px] border-[#222]" />
              <span className="ml-[10px] tracking-[-0.7px]">Adressesøk</span>
            </div>
            <div className="mt-[22px] flex items-center">
              <div className="flex h-[63px] w-[646px] items-center rounded-[4px] border-[1.5px] border-[#222] pl-[19px] text-[18px] tracking-[-0.44px] text-[#777]">Driftsmerking, nettstasjon, arbeidsordre...</div>
              <svg className="ml-[31px] h-[43px] w-[43px]" viewBox="0 0 43 43" fill="none" stroke="#000" strokeWidth="2.200" strokeLinejoin="round"><path d="M3.500 1.500H39.500Q41.700 1.500 41.300 4Q40 17 26.500 22V36L19.500 41.500Q17.500 42 17.500 40V22Q3 17 1.400 4Q1 1.500 3.500 1.500Z" /></svg>
            </div>
            <button className="mt-[51px] flex h-[63px] w-[219px] items-center justify-center gap-[10px] rounded-full bg-black text-[24px] tracking-[-0.6px] text-white"><Magnifier className="h-[31px] w-[31px]" />Søk</button>
          </main>
          <section className="relative min-w-0 flex-1">
            <RegionMap />
            <button className="absolute top-[21px] left-[633px] flex h-[52px] w-[190px] items-center rounded-[8px] bg-white pl-[20px] text-[18px] font-medium tracking-[-0.500px] whitespace-nowrap text-black">
              <svg className="mr-[10px] h-[22px] w-[22px] shrink-0" viewBox="0 0 22 22" fill="none" stroke="currentColor" strokeWidth="1.500"><path d="M1 5V3a2 2 0 0 1 2-2H5M7.500 1H12M14.500 1H17a2 2 0 0 1 2 2V5M19 7.500V11M1 8V12M1 15V17a2 2 0 0 0 2 2H5M8 19H11" /><path d="M13.500 13.500L21 16L17.800 17.300L16.500 21Z" strokeLinejoin="round" /></svg>
              Marker og søk
            </button>
            <button className="absolute top-[21px] left-[843px] flex h-[52px] w-[52px] items-center justify-center rounded-full bg-white">
              <svg className="h-[32px] w-[32px]" viewBox="0 0 32 32" fill="none" stroke="#000" strokeWidth="2" strokeLinejoin="round" strokeLinecap="round"><path d="M16 1.200L31 9L16 16.800L1 9ZM1 16L16 23.500L31 16M1 23L16 30.700L31 23" /></svg>
            </button>
            <div className="absolute top-[440px] left-[865px] flex h-[94px] w-[41px] flex-col items-center justify-between rounded-[8px] bg-white py-[10px]">
              <svg className="h-[21px] w-[21px]" viewBox="0 0 21 21" stroke="#000" strokeWidth="2"><path d="M0 10.500H21M10.500 0V21" /></svg>
              <svg className="h-[21px] w-[21px]" viewBox="0 0 21 21" stroke="#000" strokeWidth="2"><path d="M0 10.500H21" /></svg>
            </div>
          </section>
        </div>
        <div className="pointer-events-none absolute top-0 left-[1557px] h-[261px] w-[260px] rounded-full shadow-[0_0_0_2200px_rgba(0,0,0,0.25)]" />
        <button className="absolute top-[32px] left-[1802px] flex h-[41px] w-[41px] items-center justify-center rounded-full border-2 border-[#29d305] bg-white">
          <svg className="h-[19px] w-[19px]" viewBox="0 0 19 19" stroke="#000" strokeWidth="2.500" strokeLinecap="round"><path d="M1.500 1.500L17.500 17.500M17.500 1.500L1.500 17.500" /></svg>
        </button>
        <div className="absolute top-[928px] left-[238.500px] flex h-[182px] w-[1398px] items-start overflow-hidden rounded-[5px] border-t-[5px] border-[#29d305] bg-white pl-[52px] text-black">
          <h2 className="mt-[52px] w-[275px] text-[30px] leading-[40px] font-bold tracking-[0.200px]">Title</h2>
          <p className="mt-[54px] w-[650px] text-[19.5px] leading-[36px] tracking-[-0.030px] whitespace-nowrap text-[#161616]">Here is the text that will describe what is new. Try to keep it short but<br />descriptive.</p>
          <div className="mt-[53px] ml-[118.500px] flex items-center">
            <button className="flex h-[42px] w-[42px] items-center justify-center rounded-full border-[2.5px] border-[#29d305]">
              <svg className="h-[18px] w-[20px]" viewBox="0 0 20 18" fill="none" stroke="#000" strokeWidth="2.600" strokeLinecap="round" strokeLinejoin="round"><path d="M18.500 9H1.500M8.500 2L1.500 9L8.500 16" /></svg>
            </button>
            <div className="ml-[31px] flex gap-[20px]">
              <span className="h-[11px] w-[11px] rounded-full border-[1.5px] border-black" />
              <span className="h-[11px] w-[11px] rounded-full border-[1.5px] border-black" />
              <span className="h-[11px] w-[11px] rounded-full border-[1.5px] border-black" />
              <span className="h-[11px] w-[11px] rounded-full bg-[#29d305]" />
            </div>
            <button className="ml-[31px] flex h-[42px] w-[42px] items-center justify-center rounded-full bg-[#29d305]">
              <svg className="h-[16px] w-[22px]" viewBox="0 0 22 16" fill="none" stroke="#000" strokeWidth="2.400" strokeLinecap="round" strokeLinejoin="round"><path d="M1.500 9L7.500 14.500L20.500 1.500" /></svg>
            </button>
          </div>
        </div>
      </div>
    </div>
  );
}
